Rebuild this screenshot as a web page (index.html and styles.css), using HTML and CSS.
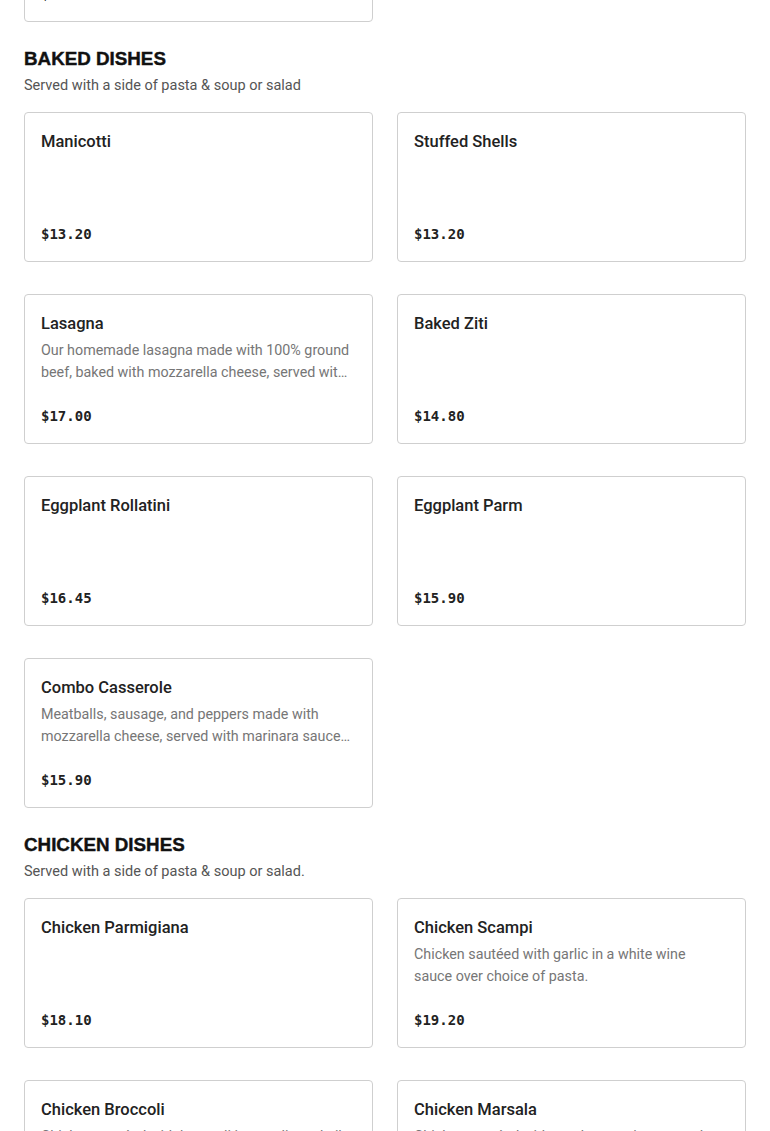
FILE: index.html
```html
<!DOCTYPE html>
<html lang="en">
<head>
<meta charset="utf-8">
<title>Menu</title>
<link rel="stylesheet" href="styles.css">
</head>
<body>
<main class="menu">
  <section class="section section-prev">
    <div class="grid">
      <article class="card">
        <h3 class="item-name">Garlic Bread</h3>
        <p class="price">$5.50</p>
      </article>
    </div>
  </section>

  <section class="section">
    <h2 class="section-title">BAKED DISHES</h2>
    <p class="section-sub">Served with a side of pasta &amp; soup or salad</p>
    <div class="grid">
      <article class="card">
        <h3 class="item-name">Manicotti</h3>
        <p class="price">$13.20</p>
      </article>
      <article class="card">
        <h3 class="item-name">Stuffed Shells</h3>
        <p class="price">$13.20</p>
      </article>
      <article class="card">
        <h3 class="item-name">Lasagna</h3>
        <p class="desc">Our homemade lasagna made with 100% ground beef, baked with mozzarella cheese, served with marinara sauce.</p>
        <p class="price">$17.00</p>
      </article>
      <article class="card">
        <h3 class="item-name">Baked Ziti</h3>
        <p class="price">$14.80</p>
      </article>
      <article class="card">
        <h3 class="item-name">Eggplant Rollatini</h3>
        <p class="price">$16.45</p>
      </article>
      <article class="card">
        <h3 class="item-name">Eggplant Parm</h3>
        <p class="price">$15.90</p>
      </article>
      <article class="card">
        <h3 class="item-name">Combo Casserole</h3>
        <p class="desc">Meatballs, sausage, and peppers made with mozzarella cheese, served with marinara sauce over choice of pasta.</p>
        <p class="price">$15.90</p>
      </article>
    </div>
  </section>

  <section class="section">
    <h2 class="section-title">CHICKEN DISHES</h2>
    <p class="section-sub">Served with a side of pasta &amp; soup or salad.</p>
    <div class="grid">
      <article class="card">
        <h3 class="item-name">Chicken Parmigiana</h3>
        <p class="price">$18.10</p>
      </article>
      <article class="card">
        <h3 class="item-name">Chicken Scampi</h3>
        <p class="desc">Chicken sautéed with garlic in a white wine sauce over choice of pasta.</p>
        <p class="price">$19.20</p>
      </article>
      <article class="card">
        <h3 class="item-name">Chicken Broccoli</h3>
        <p class="desc">Chicken sautéed with broccoli in a garlic and oil sauce over choice of pasta.</p>
        <p class="price">$19.20</p>
      </article>
      <article class="card">
        <h3 class="item-name">Chicken Marsala</h3>
        <p class="desc">Chicken sautéed with mushrooms in a marsala wine sauce over choice of pasta.</p>
        <p class="price">$19.20</p>
      </article>
    </div>
  </section>
</main>
</body>
</html>
```

FILE: styles.css
```css
* {
  box-sizing: border-box;
}

html, body {
  margin: 0;
  padding: 0;
  background: #ffffff;
}

body {
  font-family: Roboto, "Noto Sans", "Liberation Sans", sans-serif;
  color: #1f1f1f;
  overflow: hidden;
}

.menu {
  padding: 0 24px;
  margin-top: -128px;
  display: flex;
  flex-direction: column;
  gap: 25px;
}

.section {
  display: flex;
  flex-direction: column;
}

.section-title {
  margin: 1px 0 0;
  font-family: "Liberation Sans", Arial, sans-serif;
  font-weight: 900;
  font-size: 18.8px;
  line-height: 22px;
  color: #111111;
  -webkit-text-stroke: 0.4px #111111;
}

.section-sub {
  margin: 6px 0 0;
  font-size: 14.5px;
  line-height: 20px;
  color: #555555;
}

.grid {
  display: grid;
  grid-template-columns: 1fr 1fr;
  column-gap: 24px;
  row-gap: 32px;
  margin-top: 16px;
}

.section-prev .grid {
  margin-top: 0;
}

.card {
  height: 150px;
  border: 1px solid #cfcfcf;
  border-radius: 4px;
  padding: 17px 16px 16px;
  display: flex;
  flex-direction: column;
  background: #ffffff;
}

.item-name {
  margin: 0;
  font-size: 16.5px;
  font-weight: 500;
  line-height: 24px;
  color: #222222;
}

.desc {
  margin: 3px 0 0;
  padding-right: 5px;
  font-size: 14.3px;
  line-height: 22px;
  color: #767676;
  display: -webkit-box;
  -webkit-line-clamp: 2;
  -webkit-box-orient: vertical;
  overflow: hidden;
}

.price {
  margin: auto 0 1px;
  font-family: "DejaVu Sans Mono", "Liberation Mono", monospace;
  font-weight: 700;
  font-size: 14px;
  line-height: 20px;
  color: #222222;
}
```
